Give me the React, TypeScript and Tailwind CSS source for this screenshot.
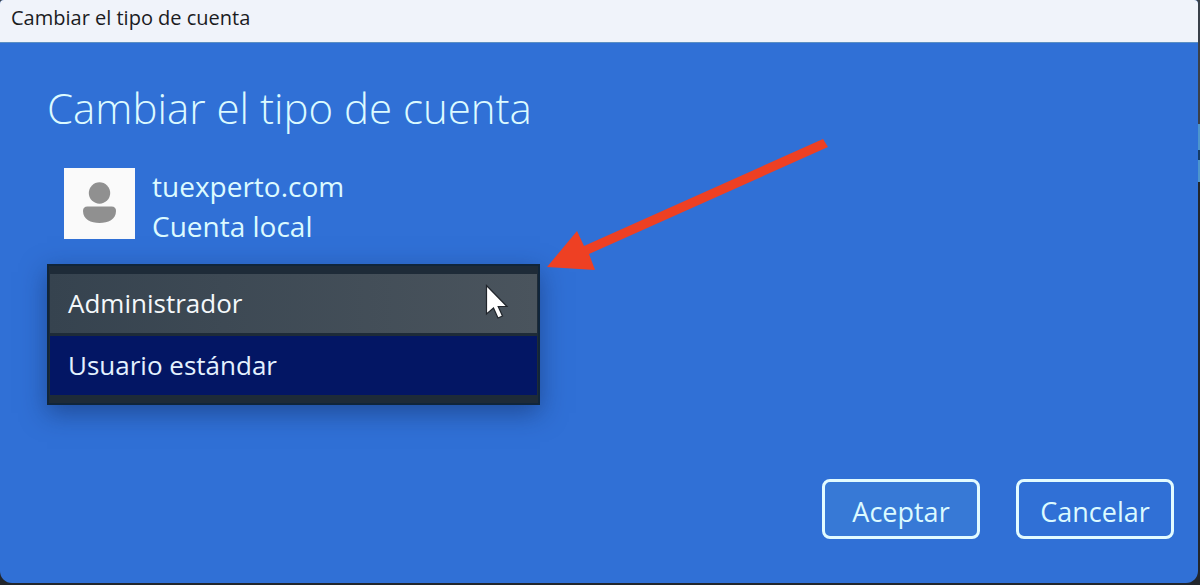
// src/App.tsx
import React, { useState } from 'react';

type AccountType = 'admin' | 'standard';

export default function App() {
  const [accountType, setAccountType] = useState<AccountType>('standard');

  const handleSubmit = (e: React.FormEvent) => {
    e.preventDefault();
  };

  return (
    <div className="min-h-screen flex bg-[#22262c] bg-[linear-gradient(#3a4049_124px,#4d95cc_124px,#4d95cc_150px,#163c66_150px,#163c66_160px,#4d95cc_160px,#4d95cc_182px,#22262c_182px)] pr-[2px] pb-[2px] font-['Open_Sans','Noto_Sans',sans-serif]">
      <div className="flex-1 flex flex-col rounded-t-sm rounded-b-xl overflow-hidden bg-[#3070d6]">
        <header className="h-[43px] shrink-0 px-[11px] flex items-center bg-[#f0f3fa] border-b border-[#5b8fc4]">
          <span className="text-[20px] leading-6 pb-1.5 text-[#1b1b1f]">Cambiar el tipo de cuenta</span>
        </header>

        <form onSubmit={handleSubmit} className="flex-1 flex flex-col text-[#dcfaff]">
          <main className="flex-1 px-[47px] pt-[35px]">
            <h1 className="text-[42px] leading-[60px] font-light">
              <label htmlFor="account-type">Cambiar el tipo de cuenta</label>
            </h1>

            <div className="mt-7 pl-[17px] flex items-start gap-[17px]">
              <div className="mt-0.5 w-[71px] h-[71px] shrink-0 bg-[#fafafa]">
                <svg viewBox="0 0 71 71" className="w-full h-full" fill="#909090" aria-hidden="true">
                  <circle cx="35.5" cy="25" r="10.7" />
                  <path d="M23.5 38.5H47.5Q52 38.5 52 43C52 51.5 44 55 35.5 55S19 51.5 19 43Q19 38.5 23.5 38.5Z" />
                </svg>
              </div>
              <div className="text-[28px] leading-10">
                <p>tuexperto.com</p>
                <p>Cuenta local</p>
              </div>
            </div>

            {/* Account type list, with the pointer and the arrow over it */}
            <div className="relative mt-[18px] w-[493px] max-w-full">
              <select
                id="account-type"
                size={2}
                value={accountType}
                onChange={(e) => setAccountType(e.target.value as AccountType)}
                className="block w-full h-[141px] px-px py-2 overflow-hidden border-2 border-[#10253a] bg-[#1e2b38] text-[26px] leading-8 shadow-[0_8px_24px_rgba(16,40,90,0.5)] outline-none"
              >
                <option
                  value="admin"
                  className="h-[59px] px-[18px] py-[11px] bg-linear-to-r from-[#36434f] to-[#4a545d] text-[#f4f8fb]"
                >
                  Administrador
                </option>
                <option
                  value="standard"
                  className="mt-[3px] h-[59px] px-[18px] py-[11px] bg-linear-to-r from-[#031664] to-[#031664] text-[#e3f1ff] checked:text-[#e3f1ff]"
                >
                  Usuario estándar
                </option>
              </select>

              <svg
                viewBox="0 0 24 36"
                className="absolute right-[31px] top-[20px] w-6 h-9 pointer-events-none"
                aria-hidden="true"
              >
                <path
                  d="M1.5 1.5V30L8.5 24L13 34L17.5 32L13.2 22.5H22Z"
                  fill="#ffffff"
                  stroke="#20252b"
                  strokeWidth="1.2"
                />
              </svg>

              <svg
                viewBox="0 0 282 132"
                className="absolute left-full top-[-126px] ml-[7px] w-[282px] h-[132px] pointer-events-none"
                fill="#ee4023"
                aria-hidden="true"
              >
                <path d="M0 129L30 93L37 108L276 1L281 9L42 116L48 132Z" />
              </svg>
            </div>
          </main>

          <footer className="flex flex-wrap justify-end gap-9 px-6 pb-11 text-[27px] leading-8">
            <button
              type="submit"
              className="w-[158px] h-[60px] rounded-lg border-3 border-[#e2fbff] bg-[#3779d6] pt-1.5"
            >
              Aceptar
            </button>
            <button
              type="button"
              className="w-[158px] h-[60px] rounded-lg border-3 border-[#e2fbff] pt-1.5"
            >
              Cancelar
            </button>
          </footer>
        </form>
      </div>
    </div>
  );
}
